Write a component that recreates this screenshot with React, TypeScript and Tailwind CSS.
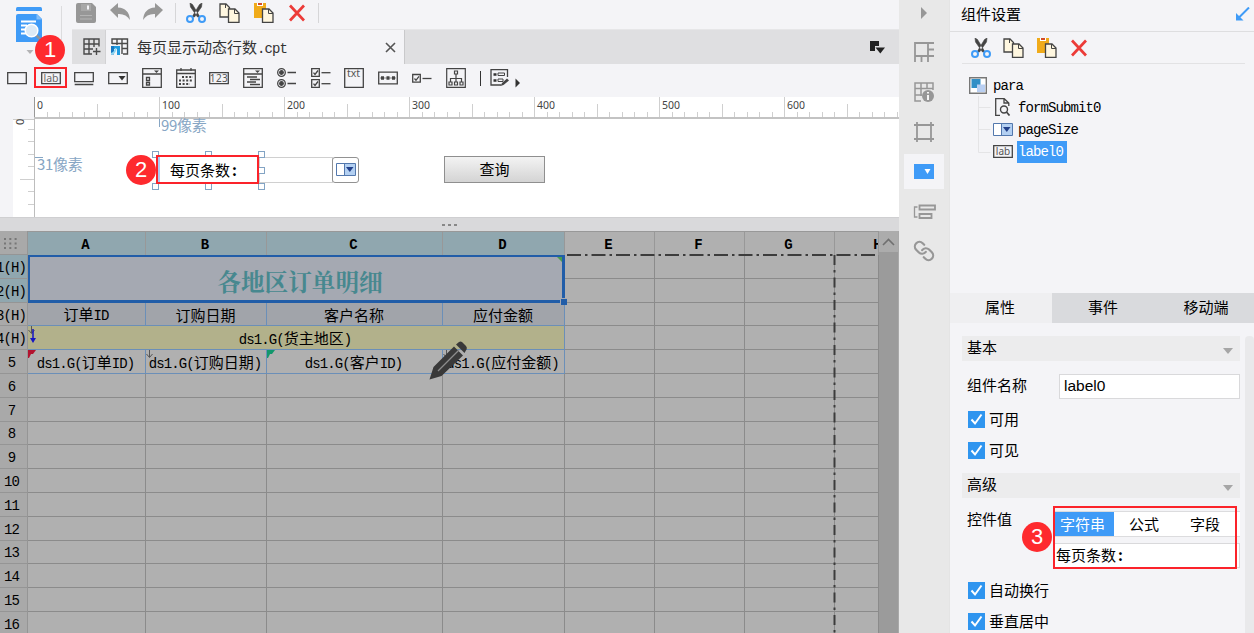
import type { ReactNode } from 'react';
import clsx from 'clsx';
import { Link } from 'lucide-react';

const CJK = "font-['Noto_Sans_CJK_SC',sans-serif]";
const COLUMNS = ['A', 'B', 'C', 'D', 'E', 'F', 'G', 'H'];
const ROWS = ['1(H)', '2(H)', '3(H)', '4(H)', '5', '6', '7', '8', '9', '10', '11', '12', '13', '14', '15', '16'];
const HEADINGS = ['订单ID', '订购日期', '客户名称', '应付金额'];
const FIELDS = ['ds1.G(订单ID)', 'ds1.G(订购日期)', 'ds1.G(客户ID)', 'ds1.G(应付金额)'];

// Half-width runs sit on a 7.5px pitch, full-width ones on 15px.
function Mixed({ text }: { text: string }) {
  return (
    <span className="whitespace-nowrap text-[15px] leading-none">
      {text.split(/([\x20-\x7e]+)/).map((run, i) =>
        i % 2 === 1 ? (
          <span key={i} className="font-['Liberation_Mono',monospace] text-[14px] tracking-[-0.9px]">
            {run}
          </span>
        ) : (
          run
        ),
      )}
    </span>
  );
}

function Icon({ w = 20, h = 20, className, children }: { w?: number; h?: number; className?: string; children: ReactNode }) {
  return (
    <svg width={w} height={h} viewBox={`0 0 ${w} ${h}`} fill="none" className={clsx('shrink-0', className)}>
      {children}
    </svg>
  );
}

function CutIcon() {
  return (
    <Icon>
      <path d="M4 0l2.500 1.500L14 14h-2.500L4.500 4zM16 0l-2.500 1.500L6 14h2.500L15.500 4z" fill="#444" stroke="#444" strokeWidth=".6" />
      <circle cx="4" cy="16" r="3" stroke="#3f9bf7" strokeWidth="2" />
      <circle cx="16" cy="16" r="3" stroke="#3f9bf7" strokeWidth="2" />
    </Icon>
  );
}

function CopyIcon() {
  return (
    <Icon w={21}>
      <path d="M1 1h6l3.500 3.500V14H1z" fill="#fff7e0" stroke="#444" strokeWidth="1.300" />
      <path d="M9.500 6H16l4 4v9.300H9.500z" fill="#fff7e0" stroke="#444" strokeWidth="1.300" />
      <path d="M15.500 6v4.500H20M6.500 1v4" stroke="#444" />
    </Icon>
  );
}

function PasteIcon() {
  return (
    <Icon w={21}>
      <path d="M1 0h12v15H1z" fill="#f0ab1a" />
      <path d="M4 0h6v3H4z" fill="#fff" />
      <path d="M5 0h4v2H5z" fill="#d34d28" />
      <path d="M9.500 6H16l4 4v9.300H9.500z" fill="#fff7e0" stroke="#444" strokeWidth="1.300" />
      <path d="M15.500 6v4.500H20" stroke="#444" />
    </Icon>
  );
}

function DeleteIcon() {
  return (
    <Icon>
      <path d="M3 2.500l14 15M17 2.500l-14 15" stroke="#ec3b38" strokeWidth="2.700" />
    </Icon>
  );
}

function ComboIcon() {
  return (
    <Icon w={20} h={13}>
      <path d="M.5.5h19v12H.5z" fill="#fff" stroke="#5378ad" />
      <path d="M8 1h11v11H8z" fill="#b3d0f2" />
      <path d="M8.500 1v11" stroke="#5378ad" />
      <path d="M10 4h7.500l-3.700 5z" fill="#22408a" />
    </Icon>
  );
}

function LabIcon() {
  return (
    <Icon w={20} h={13}>
      <path d="M.7.7h18.600v11.600H.7z" stroke="#444" strokeWidth="1.300" />
      <text x="10" y="10" textAnchor="middle" fontSize="10" fill="#555" fontFamily="Noto Sans">
        lab
      </text>
    </Icon>
  );
}

function Badge({ n, className }: { n: number; className: string }) {
  return (
    <span
      className={clsx(
        "absolute z-10 flex h-[30px] w-[30px] items-center justify-center rounded-full bg-[#fe2a2e] font-['Liberation_Sans',sans-serif] text-[22px] leading-none text-white",
        className,
      )}
    >
      {n}
    </span>
  );
}

const checkItem = (y: number) => (
  <>
    <path d={`M.7 ${y}h7.600v7.600H.7z`} stroke="#444" strokeWidth="1.300" />
    <path d={`M2.500 ${y + 4}l1.500 1.800 3-4`} stroke="#444" />
    <path d={`M10.500 ${y + 4}h9`} stroke="#444" strokeWidth="1.300" />
  </>
);

const WIDGETS: ReactNode[] = [
  <path d="M.7 4.700h18.600v11H.7z" />,
  <>
    <path d="M.7 4.700h18.600v11H.7z" />
    <text x="10" y="14" textAnchor="middle" fontSize="10.500" fill="#666" stroke="none" fontFamily="Noto Sans">
      lab
    </text>
  </>,
  <path d="M.7 4.700h18.600v9H.7zM.7 16.500h18.600" />,
  <>
    <path d="M.7 4.700h18.600v11H.7z" />
    <path d="M10.500 8h7l-3.500 4.500z" fill="#333" stroke="none" />
  </>,
  <>
    <path d="M.7.7h18.600v18.600H.7zM.7 6h18.600M4.500 9.500h3v3h-3zM4.500 14.500h3v2.500h-3z" />
    <path d="M12 2.500h5l-2.500 2.500z" fill="#444" stroke="none" />
  </>,
  <>
    <path d="M.7 2h18.600v17.300H.7zM.7 5.500h18.600M5 0v3M15 0v3" />
    <path d="M6 9h11M3 12.500h14M3 16h11" strokeWidth="2" strokeDasharray="2 1.600" />
  </>,
  <>
    <path d="M.7 4.700h18.600v11H.7z" />
    <text x="10" y="14" textAnchor="middle" fontSize="10" fill="#555" stroke="none" fontFamily="Noto Sans" letterSpacing=".5">
      123
    </text>
  </>,
  <>
    <path d="M.7.7h18.600v18.600H.7zM.7 6h18.600M4 9h10M7 11.500h10M4 14h9M7 16.500h10" />
    <path d="M12 2.500h5l-2.500 2.500z" fill="#444" stroke="none" />
  </>,
  <>
    <circle cx="4.500" cy="4.500" r="3.800" />
    <circle cx="4.500" cy="15.500" r="3.800" />
    <circle cx="4.500" cy="4.500" r="1.800" fill="#444" />
    <circle cx="4.500" cy="15.500" r="1.800" fill="#444" />
    <path d="M10.500 4.500h8.500M10.500 15.500h8.500" />
  </>,
  <>
    {checkItem(0.7)}
    {checkItem(11.7)}
  </>,
  <>
    <path d="M.7.7h18.600v18.600H.7z" />
    <text x="9.500" y="9" textAnchor="middle" fontSize="10.500" fill="#555" stroke="none" fontFamily="Noto Sans">
      txt
    </text>
  </>,
  <>
    <path d="M.7 4.200h18.600v11.600H.7z" />
    <path d="M2 10h16" strokeWidth="1" stroke="#888" />
    <path d="M3 10h3M8.500 10h3M14 10h3" strokeWidth="3.500" />
  </>,
  checkItem(6.5),
  <>
    <path d="M.7.7h18.600v18.600H.7zM8.500 3h3v3h-3zM10 6v8M4.500 14v-3.500h11V14M3 14h3v3H3zM8.500 14h3v3h-3zM14 14h3v3h-3z" strokeWidth="1.200" />
  </>,
];

function WidgetBar() {
  return (
    <div className="flex h-[33px] items-center pb-[5px]">
      {WIDGETS.map((shape, i) => (
        <div key={i} className="relative flex w-[33.750px] shrink-0 justify-center">
          <Icon className="stroke-[#444] stroke-[1.3px]">{shape}</Icon>
          {i === 1 && <span className="absolute -top-px left-0 h-[21px] w-[33px] border-2 border-[#fb232a]" />}
        </div>
      ))}
      <div className="ml-[7px] h-[15px] w-px bg-[#333]" />
      <Icon w={30} className="ml-[9px]">
        <path d="M17.500 9V1.700H1V17h10" stroke="#444" strokeWidth="1.300" />
        <path d="M3.500 6.500h3M3.500 12.500h3" stroke="#333" strokeWidth="2.500" />
        <path d="M8 5h6.500v2.500H8zM8 11h5v2.500H8z" stroke="#444" />
        <path d="M10.500 18l1.500-3 5-4.500 2 2-5.500 4.500z" fill="#444" />
        <path d="M25.500 10.500l4.500 4.500-4.500 4.500z" fill="#333" />
      </Icon>
    </div>
  );
}

function Logo() {
  return (
    <div className="relative h-16 w-[72px] shrink-0 pl-4 pt-[6px]">
      <Icon w={28} h={50}>
        <path d="M0 5V2.500Q0 1 1.500 1h23Q26 1 26 2.500V5z" fill="#3f9bf7" />
        <path d="M0 10q0-2 2-2h19l5 5v23H0z" fill="#3f9bf7" />
        <path d="M26 13.500L20.500 8v5.500z" fill="#82bef9" />
        <path d="M5 15.500h15M5 19.500h6M5 23.500h4M5 27.500h5" stroke="#fff" strokeWidth="2" />
        <path d="M20 29l4 4" stroke="#8d949c" strokeWidth="2.500" />
        <circle cx="15.500" cy="24.500" r="6.300" fill="#dceaf6" stroke="#fff" strokeWidth="1.500" />
        <path d="M10.500 44h7L14 48z" fill="#b3b3b5" />
      </Icon>
      <div className="absolute left-[61px] top-[6px] h-[34px] w-px bg-[#dcdcde]" />
      <Badge n={1} className="left-[35px] top-[35px]" />
    </div>
  );
}

function Toolbar() {
  return (
    <div className="flex h-[29px] items-center gap-[13px] pl-1 pb-[3px]">
      <Icon>
        <path d="M2 0h14l4 4v14q0 2-2 2H2q-2 0-2-2V2q0-2 2-2z" fill="#979797" />
        <path d="M5 1h10v7H5z" fill="#a8a8a8" />
        <path d="M11 2.500h2v4h-2z" fill="#f4f4f7" />
        <path d="M4 12.500h12M4 16h12" stroke="#b4b4b4" />
      </Icon>
      <Icon className="ml-[1px]">
        <path d="M0 7L8 0v4.500q11 .5 12 12.500-4-6.500-12-6V15z" fill="#979797" />
      </Icon>
      <Icon>
        <path d="M20 7L12 0v4.500Q1 5 0 17q4-6.500 12-6V15z" fill="#979797" />
      </Icon>
      <div className="-ml-[1px] -mr-[3px] h-5 w-px bg-[#d6d6d8]" />
      <CutIcon />
      <CopyIcon />
      <PasteIcon />
      <DeleteIcon />
      <div className="-ml-[2px] h-5 w-px bg-[#d6d6d8]" />
    </div>
  );
}

function TabBar() {
  return (
    <div className="flex h-[35px] items-center border-t border-[#e6e6e8] bg-[#dfdfe1]">
      <div className="flex h-full w-[34px] items-center justify-end border-r border-[#d2d2d4] pr-[4px]">
        <Icon w={18} h={18} className="stroke-[#4a4a4a] stroke-[1.4px]">
          <path d="M9 16H1V1h15v7.500M1 6h15M1 11h9M6 1v15M11 1v8M13.500 10v7M10 13.500h7.500" />
        </Icon>
      </div>
      <div className="flex h-full w-[299px] items-center border-r border-[#c9c9cb] bg-[#f4f4f7] pl-[5px] pr-[8px]">
        <Icon w={18} h={18}>
          <path d="M1 6V1h15.500v15H12M1 5.500h15.500M6 1v6M11 1v15M11 10.500h5.500" stroke="#4a4a4a" strokeWidth="1.400" />
          <path d="M0 8h3v8.500H0z" fill="#1778c2" />
          <path d="M3 8h6v9H6v-6H3z" fill="#1e9be0" />
          <path d="M0 15q3.500-1 4-5l1.500 0q0 4-3.500 6.500H0z" fill="#8ed6f2" />
        </Icon>
        <span className="ml-[8px] pb-[2px] text-[#333]">
          <Mixed text="每页显示动态行数.cpt" />
        </span>
        <Icon w={11} h={11} className="ml-auto">
          <path d="M1 1l9 9M10 1l-9 9" stroke="#555" strokeWidth="1.600" />
        </Icon>
      </div>
      <Icon w={16} h={13} className="ml-auto mr-[13px]">
        <path d="M0 0h9v5H5v5H0z" fill="#222" />
        <path d="M5.500 6.500H15l-4.700 6z" fill="#222" />
      </Icon>
    </div>
  );
}

function HorizontalRuler() {
  return (
    <div className="h-[22px] shrink-0 pl-[34px]">
      <svg width="865" height="22" className="block bg-white">
        {Array.from({ length: 70 }, (_, i) => {
          const top = i % 10 === 0 ? 0 : i % 5 === 0 ? 7 : 15;
          return <path key={i} d={`M${Math.round(i * 12.5) + 0.5} ${top}V20`} stroke={i ? '#cfcfcf' : '#999'} />;
        })}
        {[0, 100, 200, 300, 400, 500, 600].map((n) => (
          <text key={n} x={n * 1.25 + 3} y="12" fontSize="11.500" textLength={n ? 18 : 6} lengthAdjust="spacingAndGlyphs" fill="#444" fontFamily="Noto Sans">
            {n}
          </text>
        ))}
        <path d="M0 21h865" stroke="#c3c3c3" strokeWidth="2" />
      </svg>
    </div>
  );
}

function VerticalRuler() {
  return (
    <svg width="22" height="98" className="ml-[13px] block shrink-0 bg-white">
      <path d="M0 0h22" stroke="#999" />
      {[11, 23, 36, 48, 61, 73, 86].map((y) => (
        <path key={y} d={`M${y === 61 ? 7 : 15} ${y - 0.5}h6`} stroke="#cfcfcf" />
      ))}
      <path d="M7 60.500h14" stroke="#cfcfcf" />
      <text x="-6" y="11" transform="rotate(-90)" fontSize="11" fill="#444" fontFamily="Noto Sans">
        0
      </text>
      <path d="M21.500 0v98" stroke="#bdbdbd" />
    </svg>
  );
}

const HANDLES = [
  'left-[117px] top-[32px]',
  'left-[170px] top-[32px]',
  'left-[223px] top-[32px]',
  'left-[223px] top-[48px]',
  'left-[117px] top-[64px]',
  'left-[170px] top-[64px]',
  'left-[223px] top-[64px]',
];

function ParameterPane() {
  return (
    <div className="flex h-[98px] shrink-0">
      <VerticalRuler />
      <div className="relative flex-1 bg-white">
        <span className="absolute left-[124px] top-0 h-2 w-px bg-[#87a6c4]" />
        <span className="absolute left-[126px] top-[-3px] text-[15px] leading-[18px] tracking-[-0.3px] text-[#87a6c4]">99像素</span>
        <span className="absolute left-0 top-[38px] h-px w-2 bg-[#87a6c4]" />
        <span className="absolute left-[2px] top-[36px] text-[15px] leading-[18px] tracking-[-0.3px] text-[#87a6c4]">31像素</span>

        <div className="absolute left-[224px] top-[38px] h-[26px] w-[74px] border border-[#d0d0d0]" />
        <div className="absolute left-[297px] top-[38px] flex h-[26px] w-[27px] items-center justify-center rounded-[3px] border border-[#929292] bg-white pb-px">
          <ComboIcon />
        </div>
        <div className="absolute left-[409px] top-[37px] flex h-[27px] w-[101px] items-center justify-center border border-[#8f8f8f] bg-gradient-to-b from-[#f3f3f3] to-[#d4d4d4] pb-[2px] text-[15px] leading-none">
          查询
        </div>

        {HANDLES.map((place) => (
          <span key={place} className={clsx('absolute h-[7px] w-[7px] border border-[#83a4c4] bg-white', place)} />
        ))}
        <div className="absolute left-[121px] top-[36px] flex h-[29px] w-[103px] items-center border-2 border-[#fb232a] bg-white">
          <span className="h-full w-[2px] bg-[#a9cbf5]" />
          <span className="ml-[10px] whitespace-nowrap text-[15px] leading-none">
            每页条数<b className="ml-[2px]">:</b>
          </span>
        </div>
        <Badge n={2} className="left-[91px] top-[36px]" />
      </div>
    </div>
  );
}

function Marker({ kind }: { kind: 'arrow' | 'red' | 'green' }) {
  if (kind === 'arrow') {
    return (
      <Icon w={8} h={9} className="absolute left-0 top-0">
        <path d="M3.500 0v7M.5 4l3 3.500 3-3.500" stroke="#555" />
      </Icon>
    );
  }
  return (
    <Icon w={8} h={8} className="absolute left-0 top-0">
      <path d="M0 0h8L5 4H3L1 8H0z" fill={kind === 'red' ? '#b3132f' : '#12976c'} />
    </Icon>
  );
}

const MARKERS = ['red', 'arrow', 'green', 'arrow'] as const;

function SheetRow({ index }: { index: number }) {
  const filler = COLUMNS.slice(4);
  const edge = 'border-b border-r border-[#8b8b8b]';
  return (
    <>
      <div
        className={clsx(
          'flex items-center justify-center border-b border-r border-[#959595] pb-[3px]',
          index < 2 ? 'bg-[#90a7af]' : 'bg-[#a9a9a9]',
        )}
      >
        <span className={index < 4 ? '-ml-[5px]' : '-ml-[4px]'}>
          <Mixed text={ROWS[index]!} />
        </span>
      </div>
      {index === 0 && (
        <div className="relative col-span-4 row-span-2 flex items-center justify-center border-2 border-r-[3px] border-b-[3px] border-[#215da8] bg-[#a5a9b2] pt-[6px] pl-[8px] font-['Noto_Serif_CJK_SC','Noto_Sans_CJK_SC',serif] text-[23.600px] font-bold leading-none text-[#47888f]">
          各地区订单明细
          <span className="absolute right-0 top-0 h-[5px] w-[5px] bg-[#4b9e4d] [clip-path:polygon(0_0,100%_0,100%_100%)]" />
          <span className="absolute -bottom-[5px] -right-[5px] h-[7px] w-[7px] border-l border-t border-[#a5a9b2] bg-[#215da8]" />
        </div>
      )}
      {index === 2 &&
        HEADINGS.map((text) => (
          <div key={text} className="flex items-center justify-center border-b border-r border-[#6b8fb8] bg-[#a1a4aa] pr-[1px] pt-[1px]">
            <Mixed text={text} />
          </div>
        ))}
      {index === 3 && (
        <div className="relative col-span-4 flex items-center justify-center border-b border-r border-[#6b8fb8] bg-[#b2b18b] pr-[2px] pt-[1px]">
          <Marker kind="arrow" />
          <Icon w={6} h={16} className="absolute left-[2px] top-[3px]">
            <path d="M3 0v12" stroke="#1515c4" strokeWidth="1.500" />
            <path d="M0 9h6l-3 5z" fill="#1515c4" />
          </Icon>
          <Mixed text="ds1.G(货主地区)" />
        </div>
      )}
      {index === 4 &&
        FIELDS.map((text, i) => (
          <div key={text} className="relative flex items-center justify-center border-b border-r border-[#6b8fb8] bg-[#b0b0b0] pr-[2px] pt-[1px]">
            <Marker kind={MARKERS[i]!} />
            <Mixed text={text} />
          </div>
        ))}
      {index > 4 && COLUMNS.slice(0, 4).map((c) => <div key={c} className={edge} />)}
      {filler.map((c) => (
        <div key={c} className={edge} />
      ))}
    </>
  );
}

function Sheet() {
  return (
    <div className="relative flex min-h-0 flex-1 overflow-hidden bg-[#b0b0b0]">
      <div className="grid w-[879px] shrink-0 auto-rows-[23.800px] grid-cols-[28px_118px_121px_176px_122px_90px_90px_90px_44px] grid-rows-[24px] overflow-hidden">
        <div className="flex items-center justify-center border-b border-r border-[#959595] bg-[#a9a9a9] pr-[8px]">
          <Icon w={14} h={12}>
            <path d="M1 2h13M1 6.500h13M1 11h13" stroke="#777" strokeWidth="2" strokeDasharray="2 3.300" />
          </Icon>
        </div>
        {COLUMNS.map((name, i) => (
          <div
            key={name}
            className={clsx(
              'flex items-center justify-center overflow-hidden border-r border-t border-[#989898] pb-[3px] pr-[3px] font-bold',
              i < 4 ? 'bg-[#90a7af]' : 'bg-[#b0b0b0]',
            )}
          >
            <span className={clsx(i === 7 && 'ml-[44px]')}>
              <Mixed text={name} />
            </span>
          </div>
        ))}
        {ROWS.map((row, i) => (
          <SheetRow key={row} index={i} />
        ))}
      </div>
      <div className="flex w-5 flex-col border-r border-[#a9a9a9] bg-[#9b9b9b]">
        <div className="flex h-[21px] items-center justify-center bg-[#acacac]">
          <Icon w={13} h={8}>
            <path d="M1 7l5.500-5.500L12 7" stroke="#707070" strokeWidth="1.600" />
          </Icon>
        </div>
      </div>
      {/* page break guides */}
      <svg width="879" height="402" className="pointer-events-none absolute left-0 top-0" fill="none" stroke="#3c3c3c" strokeWidth="2">
        <path d="M567 24h312" strokeDasharray="14 4 2.500 4" />
        <path d="M834.500 24v378" strokeDasharray="10 5 2.500 5" />
      </svg>
      <Icon w={40} h={40} className="absolute left-[429px] top-[110px]">
        <path d="M.5 38.500L4.500 26 12.500 35zM4.500 26L25 5.500l9 9L12.500 35z" fill="#393939" />
        <path d="M27 3.500l3-2.500q1.500-1 3 0l4 4q1.500 1.500 .5 3.500l-2 3.500z" fill="#393939" />
        <path d="M9 30L30 9" stroke="#8c8c8c" strokeWidth="1.300" />
      </Icon>
    </div>
  );
}

function SideRail() {
  return (
    <div className="flex w-[51px] shrink-0 flex-col items-center border-r border-[#e4e4e4] bg-[#e8e8e8] stroke-[#979797] stroke-[1.8px]">
      <Icon w={6} h={12} className="mt-[7px]">
        <path d="M0 0l6 6-6 6z" fill="#979797" stroke="none" />
      </Icon>
      <Icon className="mt-[23px]">
        <path d="M20 1H1v19M1 14h19M14 1v19M7.500 14v6M14 7.500h6" />
      </Icon>
      <Icon className="mt-5">
        <path d="M19 8V1H1v18h6M1 6.500h18M7 1v13M13 1v6M1 13h7" strokeWidth="1.500" />
        <circle cx="14" cy="14" r="6" fill="#979797" stroke="none" />
        <path d="M14 13v5M14 10v1.500" stroke="#fff" />
      </Icon>
      <Icon className="mt-5">
        <path d="M3 0v20M17 0v20M0 3h20M0 17h20" />
      </Icon>
      <div className="mt-[12px] flex h-[35px] w-10 items-center justify-center bg-[#f4f4f7]">
        <Icon w={20} h={15}>
          <path d="M0 0h20v15H0z" fill="#3f9bf7" stroke="none" />
          <path d="M10.500 5h6l-3 5z" fill="#fff" stroke="none" />
        </Icon>
      </div>
      <Icon w={23} h={16} className="mt-[15px]">
        <path d="M4.500 3H1.500v10h3" strokeWidth="1.300" />
        <path d="M6.500 1.500h15.500v4H6.500zM6.500 10h12v4h-12z" />
      </Icon>
      <Link size={22} color="#979797" strokeWidth={2.400} className="mt-[20px] -scale-x-100" />
    </div>
  );
}

function TreeRow({ icon, name, selected }: { icon: ReactNode; name: string; selected?: boolean }) {
  return (
    <div className="flex h-[22.400px] items-center">
      <span className="w-5">{icon}</span>
      <span className={clsx('ml-[4px] flex h-[22px] items-center pb-[2px] pl-px', selected ? 'bg-[#3f9bf7] pr-[4px] text-white' : 'pr-[2px]')}>
        <Mixed text={name} />
      </span>
    </div>
  );
}

function ComponentTree() {
  return (
    <div className="h-[229px] pl-[19px] pt-[10px]">
      <div className="flex h-[22px] items-center">
        <Icon w={18} h={17}>
          <path d="M.7.7h16.600v15.600H.7z" fill="#fff" stroke="#777" strokeWidth="1.400" />
          <path d="M2.500 2h9v9h-9z" fill="#328fc6" />
          <path d="M8 7.500h8V15H8z" fill="#b9cff2" />
        </Icon>
        <span className="ml-[6px] pb-[2px]">
          <Mixed text="para" />
        </span>
      </div>
      <div className="relative pl-[24px]">
        <svg width="14" height="58" fill="none" stroke="#e4e4e6" className="absolute left-[9px] top-0">
          <path d="M.5 0v56.500h12M.5 11.500h12M.5 33.500h12" />
        </svg>
        <TreeRow
          name="formSubmit0"
          icon={
            <Icon w={20} h={18}>
              <path d="M7 17.300H2.700V.7h8.500L15.800 5v3M11 .7V5h4.800" stroke="#444" strokeWidth="1.300" />
              <circle cx="11" cy="11.500" r="3.500" stroke="#444" strokeWidth="1.400" />
              <path d="M13.500 14l3 3.500" stroke="#444" strokeWidth="1.700" />
            </Icon>
          }
        />
        <TreeRow name="pageSize" icon={<ComboIcon />} />
        <TreeRow name="label0" icon={<LabIcon />} selected />
      </div>
    </div>
  );
}

function SectionTitle({ children }: { children: ReactNode }) {
  return (
    <div className="flex h-[25px] w-[278px] items-center justify-between bg-[#ececed] pb-[4px] pl-[5px] pr-[7px]">
      {children}
      <Icon w={10} h={6} className="mt-[8px]">
        <path d="M0 0h10L5 6z" fill="#a6a6a6" />
      </Icon>
    </div>
  );
}

function Check({ children }: { children: ReactNode }) {
  return (
    <div className="flex h-[31px] items-center pl-[6px]">
      <Icon w={17} h={17}>
        <path d="M0 0h17v17H0z" fill="#2f95ef" />
        <path d="M3.500 8.500l3.500 4 6.500-9" stroke="#fff" strokeWidth="2" />
      </Icon>
      <span className="ml-[4px] pb-[2px]">{children}</span>
    </div>
  );
}

function PropertyForm() {
  return (
    <div className="flex min-h-0 flex-1 justify-between overflow-hidden pl-3 pt-[13px]">
      <div className="w-[278px]">
        <SectionTitle>基本</SectionTitle>
        <div className="flex h-[43px] items-center pl-[5px] pt-[7px]">
          <span className="w-[92px] pb-[3px]">组件名称</span>
          <span className="flex h-[25px] flex-1 items-center border border-[#d9d9db] bg-white pb-px pl-[4px] font-['Liberation_Sans',sans-serif] text-[15.500px]">
            label0
          </span>
        </div>
        <Check>可用</Check>
        <Check>可见</Check>
        <div className="h-[7px]" />
        <SectionTitle>高级</SectionTitle>
        <div className="relative flex h-[77px] pl-[5px] pt-[13px]">
          <span className="w-[86px]">控件值</span>
          <div className="flex flex-1 flex-col gap-[6px]">
            <div className="flex h-[26px] border-y border-[#dcdcde] bg-white text-center leading-[23px]">
              <span className="w-[61px] bg-[#3f9bf7] pr-[2px] text-white">字符串</span>
              <span className="w-[60px]">公式</span>
              <span className="w-[62px]">字段</span>
            </div>
            <div className="h-[25px] border border-[#d9d9db] bg-white pl-[2px] leading-[22px]">
              每页条数<b className="ml-[2px]">:</b>
            </div>
          </div>
          <span className="absolute left-[91px] top-[8px] h-[63px] w-[184px] border-2 border-[#fb232a]" />
          <Badge n={3} className="left-[60px] top-[24px]" />
        </div>
        <Check>自动换行</Check>
        <Check>垂直居中</Check>
      </div>
      <div className="w-[9px] rounded-t bg-[#e9e9eb]" />
    </div>
  );
}

function SettingsPanel() {
  return (
    <aside className="flex min-w-0 flex-1 flex-col text-[15px] leading-none">
      <div className="flex h-8 items-center justify-between border-b border-[#dedee0] pb-[4px] pl-[11px] pr-[4px]">
        组件设置
        <Icon w={15} h={14}>
          <path d="M14 .5L4 10.500" stroke="#3f9bf7" strokeWidth="2" />
          <path d="M1 6l7.500 7.500H1z" fill="#3f9bf7" />
        </Icon>
      </div>
      <div className="ml-3 mr-[9px] flex h-8 items-center gap-[12px] border-b border-[#e2e2e4] pl-[9px]">
        <CutIcon />
        <CopyIcon />
        <PasteIcon />
        <DeleteIcon />
      </div>
      <ComponentTree />
      <div className="flex h-[30px] shrink-0 bg-[#d9dadd] text-center leading-[28px]">
        <span className="w-[102px] shrink-0 bg-[#efeff1] pr-[2px]">属性</span>
        <span className="w-[102px] shrink-0">事件</span>
        <span className="w-[100px] shrink-0 pl-[4px]">移动端</span>
      </div>
      <PropertyForm />
    </aside>
  );
}

export default function App() {
  return (
    <div className={clsx('flex h-[633px] w-[1254px] overflow-hidden bg-[#f4f4f7] text-black', CJK)}>
      <main className="flex w-[899px] shrink-0 flex-col">
        <div className="flex h-16 shrink-0">
          <Logo />
          <div className="flex-1">
            <Toolbar />
            <TabBar />
          </div>
        </div>
        <WidgetBar />
        <HorizontalRuler />
        <ParameterPane />
        <div className="flex h-[14px] shrink-0 items-center justify-center gap-[3px] border-t border-[#cfcfd1] bg-[#d9d9db]">
          <span className="h-[2px] w-[3px] bg-[#888]" />
          <span className="h-[2px] w-[3px] bg-[#888]" />
          <span className="h-[2px] w-[3px] bg-[#888]" />
        </div>
        <Sheet />
      </main>
      <SideRail />
      <SettingsPanel />
    </div>
  );
}
